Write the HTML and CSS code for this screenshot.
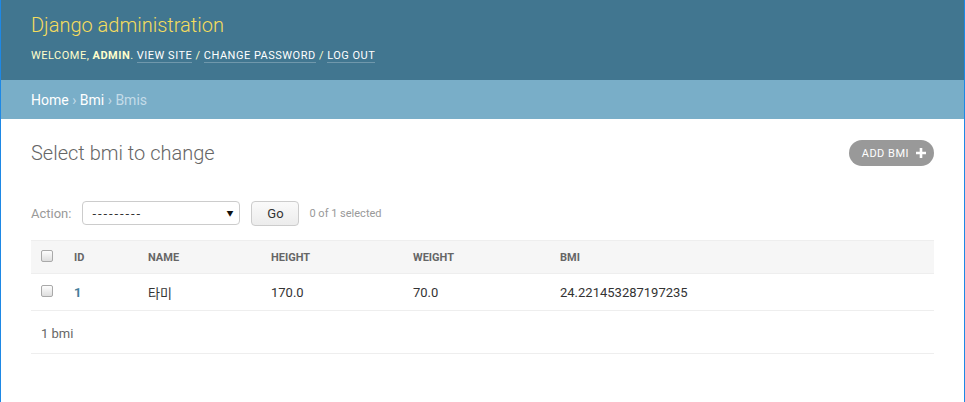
FILE: index.html
```html
<!DOCTYPE html>
<html>
<head>
<meta charset="utf-8">
<title>Select bmi to change | Django site admin</title>
<link rel="stylesheet" href="styles.css">
</head>
<body>
<div class="frame">
  <header class="header">
    <div class="branding">Django administration</div>
    <div class="user-tools">
      Welcome, <strong>admin</strong>. <a href="#">View site</a> / <a href="#">Change password</a> / <a href="#">Log out</a>
    </div>
  </header>
  <div class="breadcrumbs">
    <a href="#">Home</a> › <a href="#">Bmi</a> › Bmis
  </div>
  <main class="content">
    <div class="title-row">
      <h1 class="title">Select bmi to change</h1>
      <a class="addlink" href="#">Add bmi
        <svg class="plus" width="10" height="10" viewBox="0 0 10 10"><path d="M3.7 0h2.6v3.7H10v2.6H6.3V10H3.7V6.3H0V3.7h3.7z" fill="#fff"/></svg>
      </a>
    </div>
    <div class="actions">
      <span class="action-label">Action:</span>
      <span class="select"><span class="select-text">---------</span><span class="select-arrow">▼</span></span>
      <span class="go">Go</span>
      <span class="counter">0 of 1 selected</span>
    </div>
    <table class="results">
      <colgroup>
        <col class="c-check"><col class="c-id"><col class="c-name"><col class="c-height"><col class="c-weight"><col>
      </colgroup>
      <thead>
        <tr>
          <th class="check-cell"><span class="cb"></span></th>
          <th>ID</th>
          <th>Name</th>
          <th>Height</th>
          <th>Weight</th>
          <th>Bmi</th>
        </tr>
      </thead>
      <tbody>
        <tr>
          <td class="check-cell"><span class="cb"></span></td>
          <td><a class="idlink" href="#">1</a></td>
          <td>타미</td>
          <td>170.0</td>
          <td>70.0</td>
          <td>24.221453287197235</td>
        </tr>
      </tbody>
    </table>
    <p class="paginator">1 bmi</p>
  </main>
</div>
</body>
</html>
```

FILE: styles.css
```css
html, body {
  margin: 0;
  padding: 0;
}
body {
  font-family: Roboto, "Noto Sans CJK KR", "Liberation Sans", sans-serif;
  color: #333;
  font-size: 14px;
  background: #fff;
}
.frame {
  min-height: 100vh;
  border-left: 1px solid #1e88e5;
  border-right: 1px solid #1e88e5;
  box-sizing: border-box;
}
a {
  text-decoration: none;
}
.header {
  background: #417690;
  height: 80px;
  box-sizing: border-box;
  padding: 13px 30px 0;
}
.branding {
  color: #f5dd5d;
  font-size: 20px;
  font-weight: 300;
  line-height: 24px;
}
.user-tools {
  margin-top: 9px;
  color: #ffc;
  font-size: 11px;
  letter-spacing: 0.5px;
  text-transform: uppercase;
  line-height: 20px;
}
.user-tools strong {
  font-weight: 700;
}
.user-tools a {
  color: #fff;
  border-bottom: 1px solid rgba(255,255,255,0.25);
}
.breadcrumbs {
  background: #79aec8;
  height: 39px;
  box-sizing: border-box;
  padding: 10px 30px;
  line-height: 20px;
  color: #c4dce8;
  font-size: 14px;
}
.breadcrumbs a {
  color: #fff;
}
.content {
  padding: 20px 30px 30px;
}
.title-row {
  display: flex;
  align-items: center;
  justify-content: space-between;
  height: 28px;
}
.title {
  margin: 0;
  font-size: 20px;
  font-weight: 300;
  color: #666;
  line-height: 28px;
}
.addlink {
  display: flex;
  align-items: center;
  gap: 7px;
  height: 26px;
  padding: 0 8px 0 13px;
  border-radius: 15px;
  background: #999;
  color: #fff;
  font-size: 11px;
  letter-spacing: 0.5px;
  text-transform: uppercase;
}
.plus {
  display: block;
}
.actions {
  display: flex;
  align-items: center;
  margin-top: 34px;
  height: 24px;
  color: #999;
  font-size: 13px;
}
.action-label {
  margin-right: 11px;
}
.select {
  display: flex;
  align-items: center;
  justify-content: space-between;
  width: 158px;
  height: 24px;
  box-sizing: border-box;
  border: 1px solid #ccc;
  border-radius: 4px;
  padding: 0 6px 0 9px;
  color: #333;
  font-size: 13px;
  background: #fff;
}
.select-text {
  letter-spacing: 1.9px;
}
.select-arrow {
  font-size: 7px;
  color: #111;
}
.go {
  display: flex;
  align-items: center;
  justify-content: center;
  margin-left: 11px;
  width: 48px;
  height: 25px;
  box-sizing: border-box;
  border: 1px solid #ccc;
  border-radius: 4px;
  background: linear-gradient(#fafafa, #ececec);
  color: #333;
  font-size: 13px;
}
.counter {
  margin-left: 10px;
  font-size: 11px;
  color: #999;
}
.results {
  margin-top: 15px;
  width: 100%;
  border-collapse: collapse;
  table-layout: fixed;
}
.c-check { width: 33px; }
.c-id { width: 74px; }
.c-name { width: 123px; }
.c-height { width: 142px; }
.c-weight { width: 147px; }
.results th, .results td {
  text-align: left;
  padding: 0 10px;
  vertical-align: middle;
}
.results thead th {
  background: #f6f6f6;
  height: 32px;
  border-top: 1px solid #eee;
  border-bottom: 1px solid #eee;
  color: #666;
  font-size: 11px;
  font-weight: 700;
  text-transform: uppercase;
}
.results tbody td {
  height: 36px;
  border-bottom: 1px solid #eee;
  font-size: 13px;
  color: #333;
}
.check-cell {
  padding-right: 0;
}
.cb {
  display: block;
  width: 12px;
  height: 12px;
  box-sizing: border-box;
  border: 1px solid #a9a9a9;
  border-radius: 2px;
  background: linear-gradient(#fdfdfd, #dedede);
  margin-top: -2px;
}
.idlink {
  color: #447e9b;
  font-weight: 700;
}
.paginator {
  margin: 0;
  padding: 12px 10px 8px;
  line-height: 22px;
  font-size: 13px;
  color: #666;
  border-bottom: 1px solid #eee;
}
```
